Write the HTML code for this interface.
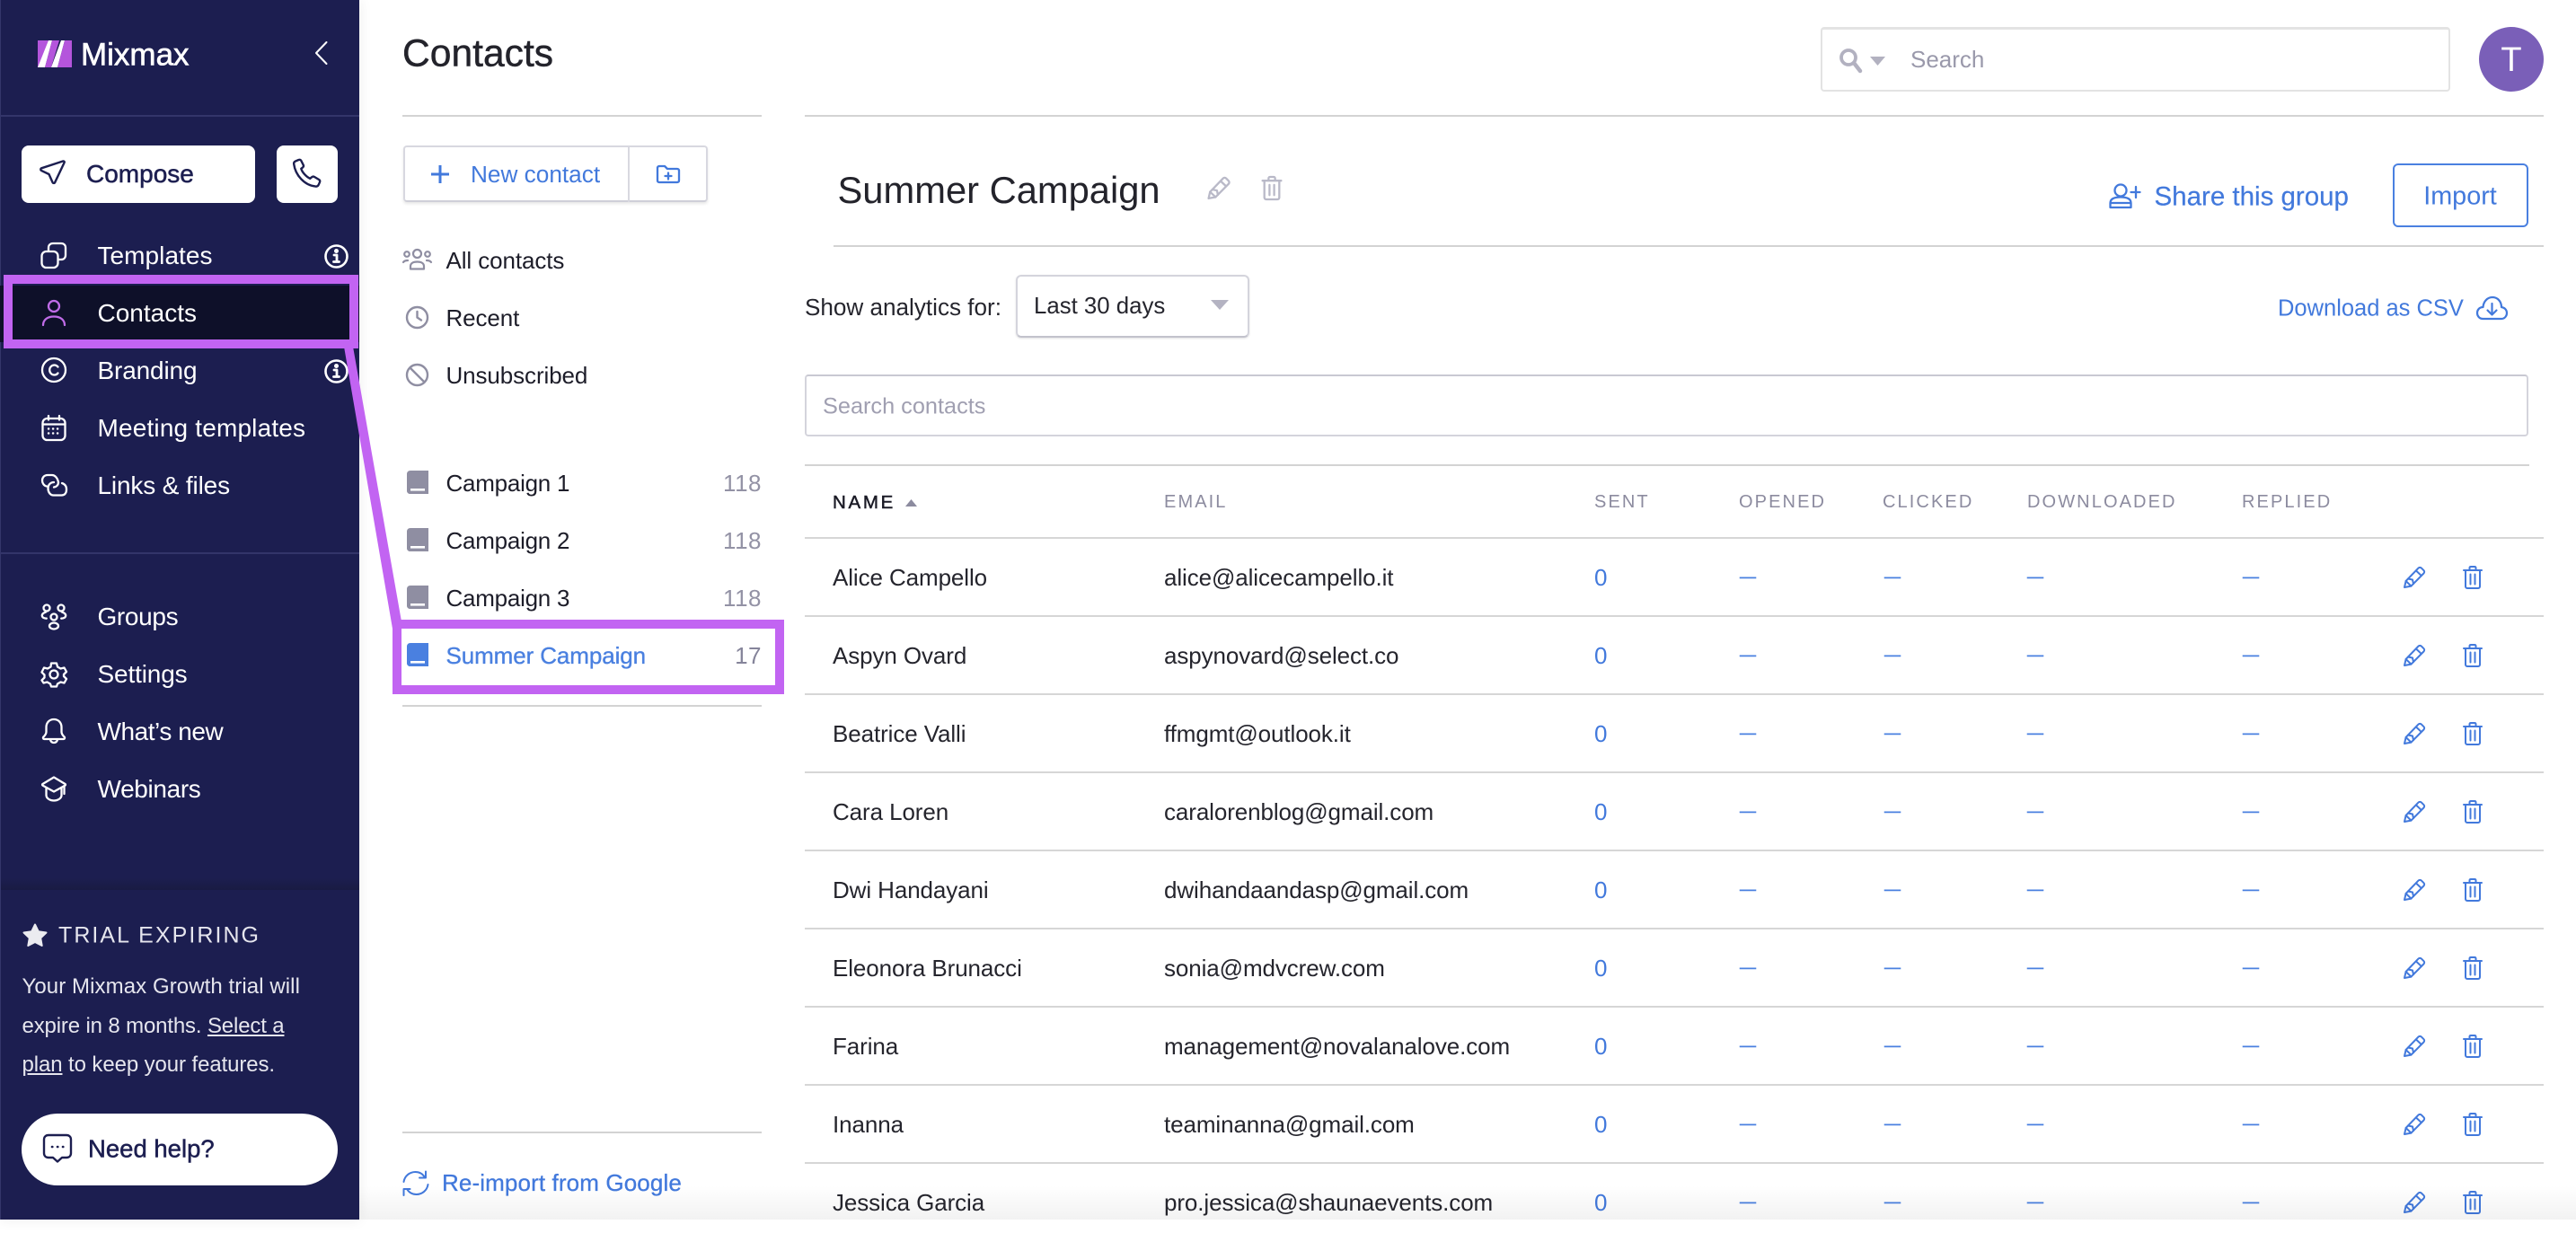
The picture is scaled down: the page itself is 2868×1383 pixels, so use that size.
<!DOCTYPE html>
<html lang="en"><head><meta charset="utf-8"><title>Contacts</title>
<style>
html,body{margin:0;padding:0;background:#fff}
body{position:relative;width:2868px;height:1358px;overflow:hidden;font-family:"Liberation Sans",Arial,sans-serif;color:#22222c}
.t{position:absolute;white-space:nowrap;line-height:1;transform:translateY(-50%)}
.a{position:absolute}
svg{position:absolute;overflow:visible;fill:none;stroke:currentColor;stroke-linecap:round;stroke-linejoin:round}
.nav{font-size:28px;color:#fff;left:108.5px;letter-spacing:-.15px}
.ni{left:46px;width:28px;height:28px;color:#fff;stroke-width:2.3}
.li{font-size:26px;left:496.5px;color:#1d1d29;letter-spacing:-.1px}
.cp{letter-spacing:-.25px}
.gi{color:#8f8ea2;stroke-width:2.4}
.cnt{font-size:26px;right:2020px;color:#9392a5;letter-spacing:.5px}
.book{left:453px;width:24px;height:26px;color:#8f8ea2}
.hr{position:absolute;height:2px;background:#d3d3d3}
.blue{color:#4279dc}
.th{top:559px;font-size:20px;letter-spacing:2.1px;color:#8c8b9f}
.r{position:absolute;left:896px;width:1936px;height:87px;border-top:2px solid #d6d6d6}
.n,.e,.z,.d{position:absolute;top:43px;line-height:1;transform:translateY(-50%);white-space:nowrap;font-size:26px}
.n{left:31px;color:#25252d;letter-spacing:-.1px}
.e{left:400px;color:#25252d;letter-spacing:-.1px}
.z{left:879px;color:#4279dc}
.d{font-size:18px;top:42px;color:#4a80e0;-webkit-text-stroke:.55px #4a80e0}
.d1{left:1041px}.d2{left:1202px}.d3{left:1361px}.d4{left:1601px}
.p{left:1779px;top:30px;width:26px;height:26px;color:#4279dc;stroke-width:2}
.x{left:1846px;top:30px;width:22px;height:26px;color:#4279dc;stroke-width:2}
</style></head><body>

<svg width="0" height="0" style="position:absolute"><defs>
<g id="pencil"><path d="M2 24l1.6-7L17.5 2.6c1-1 2.4-1 3.4 0l2.5 2.5c1 1 1 2.4 0 3.4L9.5 22.6z"/><path d="M3.600 17l5.900 5.600M6 14.500l5 1 1 4.700M15 5.500l5.500 5.200"/></g>
<g id="trash"><path d="M1 5h20M7.500 5V2.500C7.500 1.500 8.200 1 9 1h4c.8 0 1.500.5 1.500 1.500V5M3 5v18c0 1.200.8 2 2 2h12c1.200 0 2-.8 2-2V5M8.500 9.500v11M13.500 9.500v11"/></g>
<g id="book"><path d="M4 0h20v20H5c-1.500 0-2.500.8-2.500 2S3.500 24 5 24h19v2H4c-2.500 0-4-1.500-4-4V4c0-2.500 1.500-4 4-4z" fill="currentColor" stroke="none"/><path d="M0 18h24v8H4c-2.500 0-4-1.500-4-4z" fill="currentColor" stroke="none"/><rect x="4" y="20" width="16" height="2.600" fill="#fff" stroke="none"/></g>
</defs></svg>

<!-- sidebar -->
<div class="a" style="left:0;top:0;width:400px;height:1358px;background:#1c1e50;box-shadow:0 0 14px rgba(0,0,0,.08)"></div>
<div class="a" style="left:0;top:0;width:1px;height:1358px;background:#34366a"></div>
<div class="a" style="left:0;top:128px;width:400px;height:2px;background:#33356a"></div>
<div class="a" style="left:0;top:615px;width:400px;height:2px;background:#33356a"></div>

<svg style="left:42px;top:45px;stroke:none" width="38" height="30" viewBox="0 0 38 30"><polygon points="0,0 12,0 2,30 0,30" fill="#b455dc"/><polygon points="0,30 8,30 16,0 12,0" fill="#fff"/><polygon points="16,0 24,0 15,30 8,30" fill="#b455dc"/><polygon points="15,30 22,30 30,0 26,0" fill="#fff"/><polygon points="30,0 38,0 38,30 22,30" fill="#b455dc"/></svg>
<div class="t" style="left:90px;top:61px;font-size:35px;color:#fff;-webkit-text-stroke:.6px #fff">Mixmax</div>
<svg style="left:351px;top:46px;color:#fff;stroke-width:2" width="13" height="26" viewBox="0 0 13 26"><path d="M12.500 1L1 13l11.500 12"/></svg>

<div class="a" style="left:24px;top:162px;width:260px;height:64px;background:#fff;border-radius:8px"></div>
<svg style="left:44px;top:178px;color:#1c1e50;stroke-width:2.400" width="29" height="29" viewBox="0 0 29 29"><path d="M26 1.500L2.500 9.200c-1.500.5-1.600 2.200-.2 2.900l8.200 3.900 4 9c.7 1.400 2.400 1.200 2.800-.2L27.600 3c.4-1-.5-1.800-1.600-1.500z"/></svg>
<div class="t" style="left:96px;top:194px;font-size:28px;color:#1c1e50;-webkit-text-stroke:.5px #1c1e50">Compose</div>
<div class="a" style="left:308px;top:162px;width:68px;height:64px;background:#fff;border-radius:8px"></div>
<svg style="left:326px;top:177px;color:#1c1e50;stroke-width:2.400" width="33" height="33" viewBox="0 0 33 33"><path d="M3 2.500l3.500-1.500c1.200-.4 2.300 0 2.900 1.100l2.300 4.600c.5 1 .2 2-.6 2.700l-1.800 1.400c1 3.800 5.500 9 9.900 11l2-1.600c.8-.7 1.900-.8 2.900-.2l5 3c1 .6 1.300 1.700.9 2.800l-1.300 3c-.6 1.300-2 2-3.400 1.800C13 29.500 2.800 18 1.200 5.700 1 4.300 1.700 3 3 2.500z"/></svg>

<div class="a" style="left:0;top:318px;width:400px;height:63px;background:#0e1029"></div>

<svg class="ni" style="top:270px" viewBox="0 0 28 28"><rect x="0.500" y="10" width="18" height="18" rx="5"/><path d="M8 9V6c0-3 2-5 5-5h9c3 0 5 2 5 5v8c0 3-2 5-5 5h-3"/></svg>
<div class="t nav" style="top:285px;letter-spacing:.05px">Templates</div>
<svg style="left:361px;top:272px;color:#fff;stroke-width:2.600" width="27" height="27" viewBox="0 0 27 27"><circle cx="13.500" cy="13.500" r="12"/><path d="M11 12h3v7M10.500 19.500h6" stroke-width="2.800"/><circle cx="13.500" cy="7.500" r="1.200" fill="currentColor"/></svg>

<svg class="ni" style="top:334px;color:#c06ce8" viewBox="0 0 28 28"><circle cx="14" cy="7" r="6"/><path d="M2 28c0-6 5-9.500 12-9.500S26 22 26 28"/></svg>
<div class="t nav" style="top:349px;letter-spacing:0">Contacts</div>

<svg class="ni" style="top:398px" viewBox="0 0 28 28"><circle cx="14" cy="14" r="13"/><path d="M18.500 10.500c-1-1.200-2.500-2-4-2-3 0-5.300 2.500-5.300 5.500s2.300 5.500 5.300 5.500c1.500 0 3-.7 4-2"/></svg>
<div class="t nav" style="top:413px">Branding</div>
<svg style="left:361px;top:400px;color:#fff;stroke-width:2.600" width="27" height="27" viewBox="0 0 27 27"><circle cx="13.500" cy="13.500" r="12"/><path d="M11 12h3v7M10.500 19.500h6" stroke-width="2.800"/><circle cx="13.500" cy="7.500" r="1.200" fill="currentColor"/></svg>

<svg class="ni" style="top:462px" viewBox="0 0 28 28"><rect x="1.500" y="4" width="25" height="24" rx="5"/><path d="M1.500 10.500h25M8 1v4.500M20 1v4.500"/><path d="M8 15.500h.2M13 15.500h.2M18 15.500h.2M8 20.500h.2M13 20.500h.2M18 20.500h.2" stroke-width="2.400"/></svg>
<div class="t nav" style="top:477px;letter-spacing:.17px">Meeting templates</div>

<svg class="ni" style="top:527px" viewBox="0 0 28 28"><path d="M19 10C18 5 15 2 12 2H7C3 2 1 5 1 8s2 6 5 6.500"/><path d="M19 10c0 3-2 5-5 5.500"/><path d="M14 10C10 10 7.500 13 7.500 17s2.500 7.500 6 7.500h9c4 0 5.500-3 5.500-6.500s-2-6-5-7"/></svg>
<div class="t nav" style="top:541px">Links &amp; files</div>

<svg class="ni" style="top:673px" viewBox="0 0 28 28"><circle cx="6" cy="4" r="3.500"/><circle cx="22" cy="4" r="3.500"/><circle cx="14" cy="14" r="3.500"/><ellipse cx="14" cy="24" rx="5" ry="3.500"/><path d="M5 8.500C2 9.500.8 11 .8 12.500c0 2 2 3 5 3.200M23 8.500c3 1 4.200 2.500 4.200 4 0 2-2 3-5 3.200"/></svg>
<div class="t nav" style="top:687px;letter-spacing:-.35px">Groups</div>

<svg class="ni" style="top:737px" viewBox="0 0 28 28"><circle cx="14" cy="14" r="4.500"/><path d="M11 1.500h6l1 4 3.500 2 4-1 2.500 4.500-3 3v2l3 3-2.500 4.500-4-1-3.500 2-1 3h-6l-1-3-3.500-2-4 1L.5 20.500l3-3v-3l-3-3L3 6.500l4 1L10.500 5.500z" stroke-linejoin="round"/></svg>
<div class="t nav" style="top:751px">Settings</div>

<svg class="ni" style="top:800px" viewBox="0 0 28 28"><path d="M14 1c-5 0-8.500 3.500-8.500 9v5c0 2-1 3.500-3 5.500-1 1-.5 2.500 1 2.500h21c1.500 0 2-1.500 1-2.500-2-2-3-3.500-3-5.500v-5c0-5.500-3.500-9-8.500-9zM10 23.500c.5 2.500 2 3.500 4 3.500s3.500-1 4-3.500"/></svg>
<div class="t nav" style="top:815px;letter-spacing:-.45px">What’s new</div>

<svg class="ni" style="top:864px" viewBox="0 0 28 28"><path d="M14 1.500L1.500 9c-.6.400-.6 1.200 0 1.600L14 17.500l12.500-6.900c.6-.4.6-1.200 0-1.600zM5.500 13v8.500c0 3 3.500 6 8.500 6s8.500-3 8.500-6V13M25.500 11v9"/></svg>
<div class="t nav" style="top:879px;letter-spacing:-.35px">Webinars</div>

<!-- trial -->
<div class="a" style="left:1px;top:978px;width:399px;height:13px;background:linear-gradient(#1c1e50,#191b43)"></div>
<svg style="left:25px;top:1028px;color:#ebebf0;stroke:#ebebf0;stroke-width:2;fill:#ebebf0" width="28" height="27" viewBox="0 0 28 27"><polygon points="14,1.500 17.800,9.300 26.500,10.500 20.200,16.500 21.700,25 14,21 6.300,25 7.800,16.500 1.500,10.500 10.200,9.300"/></svg>
<div class="t" style="left:65px;top:1042px;font-size:25px;letter-spacing:2.050px;color:#e6e6ee">TRIAL EXPIRING</div>
<div class="t" style="left:24.5px;top:1099px;font-size:24px;color:#e6e6ee;letter-spacing:.08px">Your Mixmax Growth trial will</div>
<div class="t" style="left:24.5px;top:1143px;font-size:24px;color:#e6e6ee;letter-spacing:-.15px">expire in 8 months. <span style="text-decoration:underline">Select a</span></div>
<div class="t" style="left:24.5px;top:1186px;font-size:24px;color:#e6e6ee;letter-spacing:-.1px"><span style="text-decoration:underline">plan</span> to keep your features.</div>
<div class="a" style="left:24px;top:1240px;width:352px;height:80px;background:#fff;border-radius:40px"></div>
<svg style="left:48px;top:1263px;color:#1c1e50;stroke-width:2.400" width="32" height="32" viewBox="0 0 32 32"><path d="M6 1h20c3 0 5 2 5 5v15c0 3-2 5-5 5h-5l-5 4.500L11 26H6c-3 0-5-2-5-5V6c0-3 2-5 5-5z"/><path d="M10 14h.3M16 14h.3M22 14h.3" stroke-width="2.600"/></svg>
<div class="t" style="left:98px;top:1279px;font-size:27.500px;color:#1c1e50;-webkit-text-stroke:.5px #1c1e50">Need help?</div>

<!-- contacts column -->
<div class="t" style="left:448px;top:60px;font-size:42.600px;color:#23232b;-webkit-text-stroke:.45px #23232b">Contacts</div>
<div class="hr" style="left:448px;top:128px;width:400px"></div>

<div class="a" style="left:449px;top:162px;width:339px;height:63px;box-sizing:border-box;border:2px solid #d8d8e0;border-bottom-color:#cfcfd8;border-radius:4px;box-shadow:0 2px 3px rgba(0,0,0,.1)"></div>
<div class="a" style="left:699px;top:162px;width:2px;height:63px;background:#d8d8e0"></div>
<svg style="left:480px;top:184px;color:#4279dc;stroke-width:3;stroke-linecap:butt" width="20" height="20" viewBox="0 0 20 20"><path d="M10 0v20M0 10h20"/></svg>
<div class="t blue" style="left:524px;top:194px;font-size:26.200px">New contact</div>
<svg style="left:731px;top:184px;color:#4279dc;stroke-width:2.300" width="26" height="20" viewBox="0 0 26 20"><path d="M1 3c0-1.200.8-2 2-2h6l3 3h11c1.200 0 2 .8 2 2v11c0 1.200-.8 2-2 2H3c-1.200 0-2-.8-2-2z"/><path d="M13 8.500v7M9.500 12h7"/></svg>

<svg class="gi" style="left:448px;top:277px;stroke-width:2.200" width="33" height="24" viewBox="0 0 33 24"><circle cx="16.500" cy="5.500" r="4.500"/><circle cx="5" cy="6" r="2.800"/><circle cx="28" cy="6" r="2.800"/><path d="M9 22.500v-3c0-3 2.500-5 7.500-5s7.500 2 7.500 5v3zM1 15c1-1.500 2.500-2 5-2M32 15c-1-1.500-2.500-2-5-2"/></svg>
<div class="t li" style="top:290px">All contacts</div>
<svg class="gi" style="left:452px;top:341px" width="25" height="25" viewBox="0 0 25 25"><circle cx="12.500" cy="12.500" r="11.500"/><path d="M12.500 6v6.500l4.500 3"/></svg>
<div class="t li" style="top:354px">Recent</div>
<svg class="gi" style="left:452px;top:405px" width="25" height="25" viewBox="0 0 25 25"><circle cx="12.500" cy="12.500" r="11.500"/><path d="M4.500 4.500l16 16"/></svg>
<div class="t li" style="top:418px">Unsubscribed</div>

<svg class="book" style="top:524px;stroke:none" viewBox="0 0 24 26"><use href="#book"/></svg>
<div class="t li cp" style="top:538px">Campaign 1</div><div class="t cnt" style="top:538px">118</div>
<svg class="book" style="top:588px;stroke:none" viewBox="0 0 24 26"><use href="#book"/></svg>
<div class="t li cp" style="top:602px">Campaign 2</div><div class="t cnt" style="top:602px">118</div>
<svg class="book" style="top:652px;stroke:none" viewBox="0 0 24 26"><use href="#book"/></svg>
<div class="t li cp" style="top:666px">Campaign 3</div><div class="t cnt" style="top:666px">118</div>
<svg class="book" style="top:716px;stroke:none;color:#4a80e0" viewBox="0 0 24 26"><use href="#book"/></svg>
<div class="t li" style="top:730px;color:#4a80e0;-webkit-text-stroke:.35px #4a80e0">Summer Campaign</div><div class="t cnt" style="top:730px;color:#85849a">17</div>
<div class="hr" style="left:448px;top:785px;width:400px"></div>
<div class="hr" style="left:448px;top:1260px;width:400px"></div>
<svg style="left:448px;top:1303px;color:#4279dc;stroke-width:2" width="30" height="30" viewBox="0 0 30 30"><path d="M1.500 13C2.500 6.500 8 2 14.500 2c4.500 0 8 2 10.500 6M28.500 16c-1 6.500-6.500 11-13 11-4.500 0-8-2-10.500-6M26 1.500V8.500h-7M1.500 28v-7h7"/></svg>
<div class="t blue" style="left:492px;top:1317px;font-size:26px;letter-spacing:.12px;-webkit-text-stroke:.3px #4279dc">Re-import from Google</div>

<!-- top -->
<div class="hr" style="left:896px;top:128px;width:1936px"></div>
<div class="a" style="left:2027px;top:30px;width:701px;height:72px;box-sizing:border-box;border:2px solid #e3e3e3;border-top-width:3px;border-radius:4px"></div>
<svg style="left:2048px;top:54px;color:#b2b1c0;stroke-width:3.800" width="26" height="27" viewBox="0 0 26 27"><circle cx="10" cy="10" r="8"/><path d="M16 16l7 9" stroke-width="4.500"/></svg>
<svg style="left:2082px;top:63px;stroke:none" width="17" height="10" viewBox="0 0 17 10"><polygon points="0,0 17,0 8.500,10" fill="#b2b1c0"/></svg>
<div class="t" style="left:2127px;top:66px;font-size:26px;color:#9a99ab">Search</div>
<div class="a" style="left:2760px;top:30px;width:72px;height:72px;border-radius:50%;background:#7a5fb8"></div>
<div class="t" style="left:2796px;top:67px;font-size:38px;color:#fff;transform:translate(-50%,-50%)">T</div>

<!-- group header -->
<div class="t" style="left:932.500px;top:212px;font-size:41.700px;color:#23232b">Summer Campaign</div>
<svg style="left:1343px;top:196px;color:#b9b9c8;stroke-width:2.200" width="28" height="27" viewBox="0 0 26 26"><use href="#pencil"/></svg>
<svg style="left:1404px;top:196px;color:#b9b9c8;stroke-width:2.200" width="24" height="27" viewBox="0 0 22 26"><use href="#trash"/></svg>
<svg style="left:2348px;top:204px;color:#4279dc;stroke-width:2.300" width="35" height="28" viewBox="0 0 35 28"><circle cx="13" cy="8" r="6.500"/><path d="M1.500 27v-5c0-4 3-6.500 11.500-6.500S24.500 18 24.500 22v5zM1.500 22h23M30 4v12M24.500 10h10"/></svg>
<div class="t blue" style="left:2398.500px;top:219px;font-size:29.500px;-webkit-text-stroke:.2px #4279dc">Share this group</div>
<div class="a" style="left:2664px;top:182px;width:151px;height:71px;box-sizing:border-box;border:2px solid #4a80e0;border-radius:6px"></div>
<div class="t blue" style="left:2739px;top:219px;font-size:28.800px;transform:translate(-50%,-50%)">Import</div>
<div class="hr" style="left:928px;top:273px;width:1904px"></div>

<div class="t" style="left:896px;top:342px;font-size:26.100px;color:#25252d">Show analytics for:</div>
<div class="a" style="left:1131px;top:306px;width:260px;height:70px;box-sizing:border-box;border:2px solid #d4d4dc;border-bottom-color:#c2c2cc;border-radius:6px;box-shadow:0 1px 2px rgba(0,0,0,.12)"></div>
<div class="t" style="left:1151px;top:342px;font-size:25.800px;color:#25252d">Last 30 days</div>
<svg style="left:1348px;top:334px;stroke:none" width="20" height="11" viewBox="0 0 20 11"><polygon points="0,0 20,0 10,11" fill="#b4b3c2"/></svg>
<div class="t blue" style="left:2536px;top:344px;font-size:25.500px">Download as CSV</div>
<svg style="left:2757px;top:330px;color:#4279dc;stroke-width:2.200" width="35" height="26" viewBox="0 0 35 26"><path d="M9 25H7.500C3.500 25 1 22 1 18.500S3.500 12 7.500 12C8 5.500 12.500 1 18 1s10 4.500 10 11c3.500.5 6 3 6 6.500S31.500 25 28 25z"/><path d="M17.500 8v12M12.500 15.500l5 5 5-5"/></svg>

<div class="a" style="left:896px;top:417px;width:1919px;height:69px;box-sizing:border-box;border:2px solid #d4d4dc;border-top-color:#c9c9d2;border-radius:4px"></div>
<div class="t" style="left:916px;top:453px;font-size:25.300px;color:#a09fb1">Search contacts</div>

<!-- table -->
<div class="hr" style="left:896px;top:517px;width:1920px"></div>
<div class="t th" style="left:927px;top:560px;font-size:20.500px;letter-spacing:2.700px;color:#1b1b26;-webkit-text-stroke:.5px #1b1b26">NAME</div>
<svg style="left:1008px;top:556px;stroke:none" width="13" height="8" viewBox="0 0 13 8"><polygon points="6.500,0 13,8 0,8" fill="#8c8b9f"/></svg>
<div class="t th" style="left:1296px">EMAIL</div>
<div class="t th" style="left:1775px">SENT</div>
<div class="t th" style="left:1936px">OPENED</div>
<div class="t th" style="left:2096px">CLICKED</div>
<div class="t th" style="left:2257px">DOWNLOADED</div>
<div class="t th" style="left:2496px">REPLIED</div>

<div class="r" style="top:598px"><div class="n">Alice Campello</div><div class="e">alice@alicecampello.it</div><div class="z">0</div><div class="d d1">—</div><div class="d d2">—</div><div class="d d3">—</div><div class="d d4">—</div><svg class="p" viewBox="0 0 26 26"><use href="#pencil"/></svg><svg class="x" viewBox="0 0 22 26"><use href="#trash"/></svg></div>
<div class="r" style="top:685px"><div class="n">Aspyn Ovard</div><div class="e">aspynovard@select.co</div><div class="z">0</div><div class="d d1">—</div><div class="d d2">—</div><div class="d d3">—</div><div class="d d4">—</div><svg class="p" viewBox="0 0 26 26"><use href="#pencil"/></svg><svg class="x" viewBox="0 0 22 26"><use href="#trash"/></svg></div>
<div class="r" style="top:772px"><div class="n">Beatrice Valli</div><div class="e">ffmgmt@outlook.it</div><div class="z">0</div><div class="d d1">—</div><div class="d d2">—</div><div class="d d3">—</div><div class="d d4">—</div><svg class="p" viewBox="0 0 26 26"><use href="#pencil"/></svg><svg class="x" viewBox="0 0 22 26"><use href="#trash"/></svg></div>
<div class="r" style="top:859px"><div class="n">Cara Loren</div><div class="e">caralorenblog@gmail.com</div><div class="z">0</div><div class="d d1">—</div><div class="d d2">—</div><div class="d d3">—</div><div class="d d4">—</div><svg class="p" viewBox="0 0 26 26"><use href="#pencil"/></svg><svg class="x" viewBox="0 0 22 26"><use href="#trash"/></svg></div>
<div class="r" style="top:946px"><div class="n">Dwi Handayani</div><div class="e">dwihandaandasp@gmail.com</div><div class="z">0</div><div class="d d1">—</div><div class="d d2">—</div><div class="d d3">—</div><div class="d d4">—</div><svg class="p" viewBox="0 0 26 26"><use href="#pencil"/></svg><svg class="x" viewBox="0 0 22 26"><use href="#trash"/></svg></div>
<div class="r" style="top:1033px"><div class="n">Eleonora Brunacci</div><div class="e">sonia@mdvcrew.com</div><div class="z">0</div><div class="d d1">—</div><div class="d d2">—</div><div class="d d3">—</div><div class="d d4">—</div><svg class="p" viewBox="0 0 26 26"><use href="#pencil"/></svg><svg class="x" viewBox="0 0 22 26"><use href="#trash"/></svg></div>
<div class="r" style="top:1120px"><div class="n">Farina</div><div class="e">management@novalanalove.com</div><div class="z">0</div><div class="d d1">—</div><div class="d d2">—</div><div class="d d3">—</div><div class="d d4">—</div><svg class="p" viewBox="0 0 26 26"><use href="#pencil"/></svg><svg class="x" viewBox="0 0 22 26"><use href="#trash"/></svg></div>
<div class="r" style="top:1207px"><div class="n">Inanna</div><div class="e">teaminanna@gmail.com</div><div class="z">0</div><div class="d d1">—</div><div class="d d2">—</div><div class="d d3">—</div><div class="d d4">—</div><svg class="p" viewBox="0 0 26 26"><use href="#pencil"/></svg><svg class="x" viewBox="0 0 22 26"><use href="#trash"/></svg></div>
<div class="r" style="top:1294px"><div class="n">Jessica Garcia</div><div class="e">pro.jessica@shaunaevents.com</div><div class="z">0</div><div class="d d1">—</div><div class="d d2">—</div><div class="d d3">—</div><div class="d d4">—</div><svg class="p" viewBox="0 0 26 26"><use href="#pencil"/></svg><svg class="x" viewBox="0 0 22 26"><use href="#trash"/></svg></div>

<!-- bottom fade -->
<div class="a" style="left:400px;top:1320px;width:2468px;height:38px;background:linear-gradient(rgba(0,0,0,0),rgba(0,0,0,.05))"></div>

<!-- annotation -->
<svg style="left:0;top:0;stroke:none" width="2868" height="1358" viewBox="0 0 2868 1358"><polygon points="383,386 393,386 447,692 437,700" fill="#c264f2"/></svg>
<div class="a" style="left:4px;top:306px;width:395px;height:82px;box-sizing:border-box;border:10px solid #c264f2"></div>
<div class="a" style="left:437px;top:690px;width:436px;height:83px;box-sizing:border-box;border:10px solid #c264f2"></div>

</body></html>
